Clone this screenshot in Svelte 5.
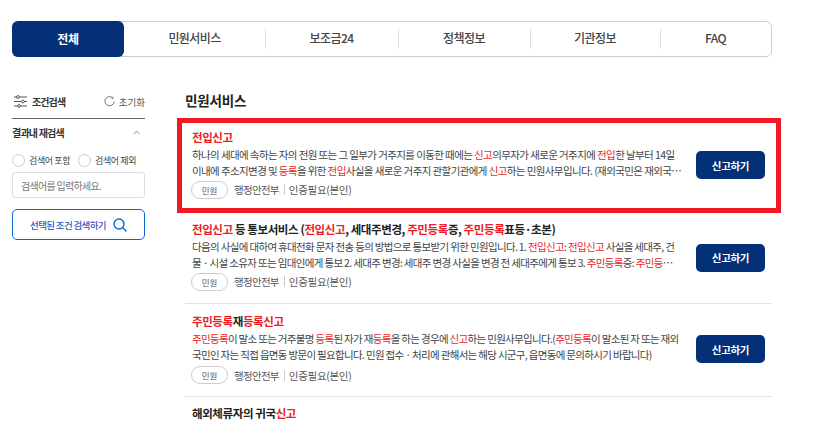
<script>
  const tabs = ['전체', '민원서비스', '보조금24', '정책정보', '기관정보', 'FAQ'];
  const rows = [
    {
      title: '전입신고',
      desc: '하나의 세대에 속하는 자의 전원 또는 그 일부가 거주지를 이동한 때에는 신고의무자가 새로운 거주지에 전입한 날부터 14일 이내에 주소지변경 및 등록을 위한 전입사실을 새로운 거주지 관할기관에게 신고하는 민원사무입니다. (재외국민은 재외국민 주민등록 신고 절차를 따릅니다)',
      featured: true
    },
    {
      title: '전입신고 등 통보서비스 (전입신고, 세대주변경, 주민등록증, 주민등록표등·초본)',
      desc: '다음의 사실에 대하여 휴대전화 문자 전송 등의 방법으로 통보받기 위한 민원입니다. 1. 전입신고: 전입신고 사실을 세대주, 건물 · 시설 소유자 또는 임대인에게 통보 2. 세대주 변경: 세대주 변경 사실을 변경 전 세대주에게 통보 3. 주민등록증: 주민등록증 발급 사실을 통보합니다'
    },
    {
      title: '주민등록재등록신고',
      desc: '주민등록이 말소 또는 거주불명 등록된 자가 재등록을 하는 경우에 신고하는 민원사무입니다.(주민등록이 말소된 자 또는 재외국민인 자는 직접 읍면동 방문이 필요합니다. 민원 접수 · 처리에 관해서는 해당 시군구, 읍면동에 문의하시기 바랍니다)'
    }
  ];
  const parts = (s) => s.split(/(전입신고|전입|신고|주민등록|등록)/).filter(Boolean);
  const isHit = (p) => /^(전입신고|전입|신고|주민등록|등록)$/.test(p);
</script>

{#snippet marked(text)}
  {#each parts(text) as p}{#if isHit(p)}<em>{p}</em>{:else}{p}{/if}{/each}
{/snippet}

<div class="page">
  <nav class="tabs">
    {#each tabs as t, i}
      <button class="tab" class:active={i === 0} class:sep={i > 1}>{t}</button>
    {/each}
  </nav>

  <div class="layout">
    <aside class="side">
      <div class="side-head">
        <svg class="ic-filter" viewBox="0 0 13 13" width="13" height="13" fill="none" stroke="#555" stroke-width="1">
          <path d="M0 2h13M0 6.500h13M0 11h13" />
          <circle cx="4" cy="2" r="1.400" fill="#fff" />
          <circle cx="9" cy="6.500" r="1.400" fill="#fff" />
          <circle cx="5" cy="11" r="1.400" fill="#fff" />
        </svg>
        <strong>조건검색</strong>
        <span class="reset">
          <svg viewBox="0 0 12 12" width="11" height="11" fill="none" stroke="#666" stroke-width="1"><path d="M9.800 2.400A5 5 0 1 0 11 6" /><path d="M10 .8v2h-2" stroke-width=".7" /></svg>
          초기화
        </span>
      </div>
      <div class="sub-head">
        <strong>결과내 재검색</strong>
        <svg viewBox="0 0 8 5" width="7" height="5" fill="none" stroke="#777" stroke-width="1"><path d="M.5 4.500 4 1l3.500 3.500" /></svg>
      </div>
      <div class="radios">
        <span class="radio"><i></i>검색어 포함</span>
        <span class="radio"><i></i>검색어 제외</span>
      </div>
      <input class="field" placeholder="검색어를 입력하세요." />
      <button class="apply">
        선택된 조건 검색하기
        <svg viewBox="0 0 14 14" width="14" height="14" fill="none" stroke="#0b66d8" stroke-width="1.400"><circle cx="6" cy="6" r="5" /><path d="m9.700 9.700 3.800 3.800" /></svg>
      </button>
    </aside>

    <main class="main">
      <h2>민원서비스</h2>
      {#each rows as r}
        <article class="row" class:featured={r.featured}>
          <div class="body">
            <h3>{@render marked(r.title)}</h3>
            <p>{@render marked(r.desc)}</p>
            <div class="meta">
              <span class="pill">민원</span>
              <span class="org">행정안전부</span>
              <span class="auth">인증필요(본인)</span>
            </div>
          </div>
          <button class="cta">신고하기</button>
        </article>
      {/each}
      <article class="row last">
        <div class="body"><h3>{@render marked('해외체류자의 귀국신고')}</h3></div>
      </article>
    </main>
  </div>
</div>

<style>
  :global(body) {
    margin: 0;
    background: #fff;
    overflow: hidden;
  }
  .page {
    width: 760px;
    padding: 21px 0 0 12px;
    font-family: "Noto Sans CJK KR", "Noto Sans", sans-serif;
    color: #333;
  }
  button {
    font-family: inherit;
    cursor: pointer;
  }
  .tabs {
    display: grid;
    grid-template-columns: 111px 141px 133px 132px 130px 1fr;
    height: 36px;
    box-sizing: border-box;
    border: 1px solid #ccc;
    border-radius: 6px;
    align-items: center;
  }
  .tab {
    position: relative;
    height: 100%;
    border: 0;
    background: none;
    padding: 0 0 3px;
    font-size: 12px;
    font-weight: 500;
    letter-spacing: -.6px;
    color: #444;
  }
  .tab.sep::before {
    content: "";
    position: absolute;
    left: 0;
    top: 7px;
    bottom: 7px;
    width: 1px;
    background: #ddd;
  }
  .tab.active {
    height: 36px;
    margin: -1px 0 -1px -1px;
    padding-bottom: 1px;
    width: 112px;
    background: #033076;
    color: #fff;
    font-weight: 700;
    letter-spacing: -.2px;
    border-radius: 6px;
  }
  .layout {
    display: flex;
    gap: 40px;
    margin-top: 35px;
  }
  .side {
    flex: 0 0 133px;
  }
  .side-head {
    display: flex;
    align-items: center;
    height: 28px;
    padding-bottom: 6px;
    box-sizing: border-box;
    border-bottom: 1px solid #666;
    margin-top: -1px;
    font-size: 10px;
  }
  .ic-filter {
    margin: 0 5px 0 2px;
  }
  .side-head strong {
    font-weight: 700;
    letter-spacing: -.9px;
    color: #333;
  }
  .reset {
    margin-left: auto;
    display: flex;
    align-items: center;
    gap: 4px;
    font-size: 9.500px;
    color: #555;
  }
  .sub-head {
    display: flex;
    justify-content: space-between;
    align-items: center;
    margin-top: 5px;
    padding-right: 5px;
    height: 16px;
    font-size: 10px;
    letter-spacing: -.8px;
  }
  .radios {
    display: flex;
    gap: 8px;
    margin-top: 14px;
    font-size: 9px;
    color: #444;
  }
  .radio {
    display: flex;
    align-items: center;
    gap: 4px;
    letter-spacing: -.4px;
    white-space: nowrap;
  }
  .radio i {
    width: 13px;
    height: 13px;
    box-sizing: border-box;
    border: 1px solid #ccc;
    border-radius: 50%;
  }
  .field {
    display: block;
    width: 100%;
    box-sizing: border-box;
    height: 26px;
    margin-top: 5px;
    border: 1px solid #ddd;
    border-radius: 3px;
    padding: 0 8px;
    font-family: inherit;
    font-size: 10px;
    letter-spacing: -.7px;
  }
  .field::placeholder {
    color: #777;
  }
  .apply {
    display: flex;
    align-items: center;
    justify-content: center;
    gap: 7px;
    width: 100%;
    height: 31px;
    margin-top: 11px;
    background: #fff;
    border: 1px solid #0b66d8;
    border-radius: 5px;
    color: #3157c4;
    font-size: 9.500px;
    font-weight: 500;
    letter-spacing: -.65px;
    padding: 0;
  }
  .main {
    flex: 0 0 587px;
  }
  h2 {
    margin: 0;
    height: 26px;
    font-size: 13.500px;
    line-height: 16px;
    font-weight: 700;
    letter-spacing: -.2px;
    color: #222;
  }
  .row {
    position: relative;
    display: flex;
    align-items: flex-start;
    gap: 14px;
    box-sizing: border-box;
    height: 91px;
    padding: 7px 7px 0;
    border-bottom: 1px solid #e2e2e2;
  }
  .featured {
    height: 95px;
    padding-top: 10px;
    border-bottom: 0;
  }
  .featured .cta {
    margin-top: -11px;
  }
  .featured::after {
    content: "";
    position: absolute;
    inset: 0 -9px 0 -8px;
    border: 5px solid #ed1c24;
    pointer-events: none;
  }
  .row:nth-of-type(2) p {
    letter-spacing: -.66px;
  }
  .row:nth-of-type(3) {
    height: 93px;
    padding-top: 8px;
  }
  .row:nth-of-type(3) p {
    letter-spacing: -.68px;
  }
  .row:nth-of-type(3) .meta {
    margin-top: 4px;
  }
  .row:nth-of-type(3) .cta {
    margin-top: -10px;
  }
  .last {
    height: auto;
    border: 0;
    padding-top: 7px;
  }
  .body {
    flex: 1 1 0;
    min-width: 0;
  }
  h3 {
    margin: 0 0 1px;
    font-size: 11.500px;
    line-height: 18px;
    font-weight: 700;
    letter-spacing: -.4px;
    color: #222;
  }
  em {
    font-style: normal;
    color: #ee1c25;
  }
  p {
    margin: 0;
    font-size: 10.500px;
    line-height: 15.500px;
    letter-spacing: -.6px;
    color: #444;
    display: -webkit-box;
    -webkit-box-orient: vertical;
    -webkit-line-clamp: 2;
    line-clamp: 2;
    overflow: hidden;
  }
  .meta {
    display: flex;
    align-items: center;
    margin-top: 2.500px;
    font-size: 10.500px;
    color: #555;
  }
  .pill {
    width: 37px;
    height: 18px;
    box-sizing: border-box;
    border: 1px solid #ccc;
    border-radius: 9px;
    margin: 0 6px 0 -1px;
    text-align: center;
    font-size: 8.500px;
    line-height: 16px;
  }
  .org {
    letter-spacing: -.7px;
  }
  .auth {
    margin-left: 5px;
    padding-left: 4px;
    border-left: 1px solid #ccc;
    line-height: 11px;
    letter-spacing: -.3px;
  }
  .cta {
    flex: 0 0 69px;
    height: 28px;
    align-self: center;
    margin-top: -8px;
    border: 0;
    border-radius: 5px;
    background: #033076;
    color: #fff;
    font-size: 10.500px;
    font-weight: 700;
    letter-spacing: -.3px;
    padding: 0;
  }
</style>
